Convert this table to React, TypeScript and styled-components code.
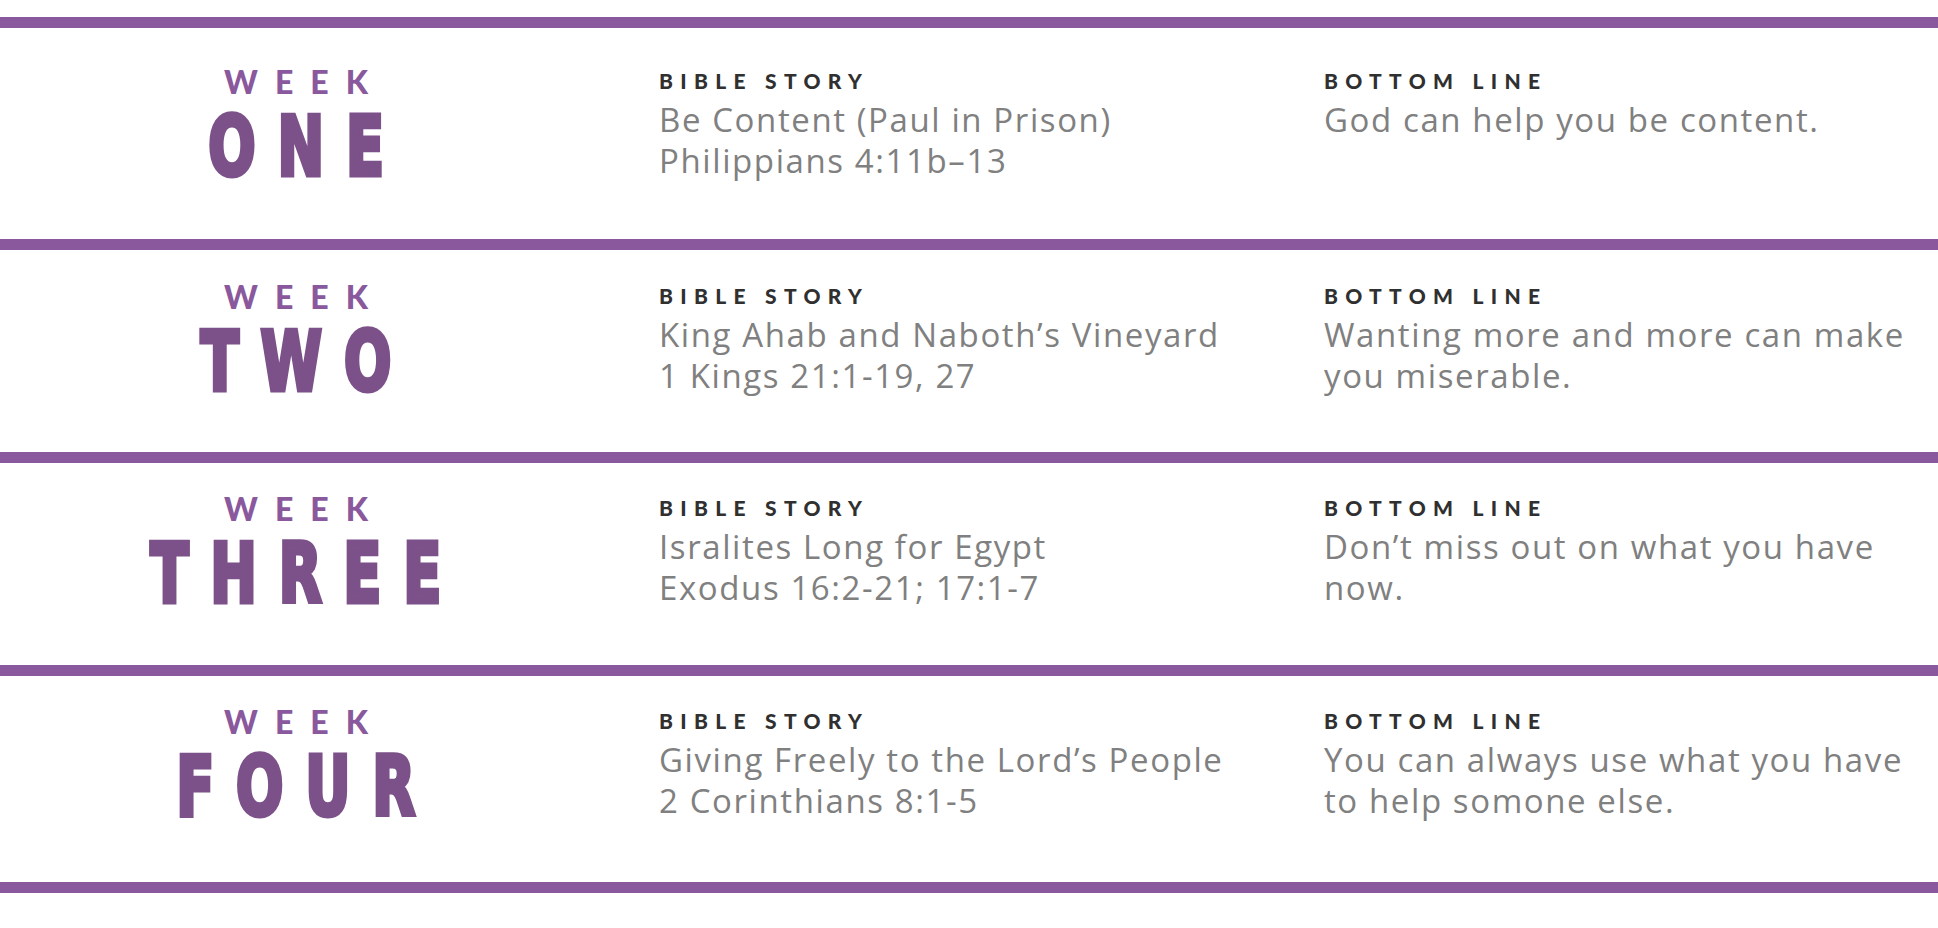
import styled, { createGlobalStyle } from 'styled-components';

const GlobalStyle = createGlobalStyle`
  html, body {
    margin: 0;
    padding: 0;
    background: #ffffff;
  }
`;

const Page = styled.div`
  padding-top: 17px;
  width: 100%;
`;

const Divider = styled.div`
  height: 11px;
  background-color: #8a589c;
`;

const Row = styled.div<{ $height: number; $top: number }>`
  display: grid;
  grid-template-columns: 592px 732px 1fr;
  height: ${(p) => p.$height}px;
  padding-top: ${(p) => p.$top}px;
  box-sizing: border-box;
`;

const WeekCell = styled.div`
  display: flex;
  flex-direction: column;
  align-items: center;
  padding-top: 3px;
`;

const WeekLabel = styled.div`
  font-family: Lato, 'Liberation Sans', sans-serif;
  font-weight: 900;
  font-size: 32px;
  line-height: 32px;
  letter-spacing: 17px;
  padding-left: 17px;
  color: #8a589c;
`;

// heavy condensed display word: bold face thickened a little, then narrowed
const WeekNumber = styled.div`
  margin-top: 8px;
  font-family: 'DejaVu Sans', sans-serif;
  font-weight: bold;
  font-size: 82px;
  line-height: 82px;
  letter-spacing: 32px;
  padding-left: 32px;
  color: #7c5189;
  -webkit-text-stroke: 5px #7c5189;
  transform: scaleX(0.68);
  white-space: nowrap;
`;

const InfoCell = styled.div<{ $indent: number }>`
  padding-left: ${(p) => p.$indent}px;
  padding-top: 6px;
`;

const Heading = styled.div`
  font-family: Lato, 'Liberation Sans', sans-serif;
  font-weight: 900;
  font-size: 21px;
  line-height: 24px;
  letter-spacing: 7.3px;
  color: #303030;
`;

const Body = styled.div`
  margin-top: 6px;
  font-family: 'Open Sans', 'Noto Sans', sans-serif;
  font-weight: 400;
  font-size: 33px;
  line-height: 41px;
  letter-spacing: 1.6px;
  color: #808080;
  white-space: nowrap;
`;

type Week = {
  label: string;
  story: string[];
  bottom: string[];
  height: number;
  top: number;
};

const weeks: Week[] = [
  {
    label: 'ONE',
    story: ['Be Content (Paul in Prison)', 'Philippians 4:11b–13'],
    bottom: ['God can help you be content.'],
    height: 211,
    top: 35,
  },
  {
    label: 'TWO',
    story: ['King Ahab and Naboth’s Vineyard', '1 Kings 21:1-19, 27'],
    bottom: ['Wanting more and more can make', 'you miserable.'],
    height: 202,
    top: 28,
  },
  {
    label: 'THREE',
    story: ['Isralites Long for Egypt', 'Exodus 16:2-21; 17:1-7'],
    bottom: ['Don’t miss out on what you have', 'now.'],
    height: 202,
    top: 27,
  },
  {
    label: 'FOUR',
    story: ['Giving Freely to the Lord’s People', '2 Corinthians 8:1-5'],
    bottom: ['You can always use what you have', 'to help somone else.'],
    height: 206,
    top: 27,
  },
];

const Lines = ({ lines }: { lines: string[] }) => (
  <Body>
    {lines.map((line, i) => (
      <span key={i}>
        {line}
        {i < lines.length - 1 && <br />}
      </span>
    ))}
  </Body>
);

const App = () => {
  return (
    <Page>
      <GlobalStyle />
      {weeks.map((week) => (
        <div key={week.label}>
          <Divider />
          <Row $height={week.height} $top={week.top}>
            <WeekCell>
              <WeekLabel>WEEK</WeekLabel>
              <WeekNumber>{week.label}</WeekNumber>
            </WeekCell>
            <InfoCell $indent={67}>
              <Heading>BIBLE STORY</Heading>
              <Lines lines={week.story} />
            </InfoCell>
            <InfoCell $indent={0}>
              <Heading>BOTTOM LINE</Heading>
              <Lines lines={week.bottom} />
            </InfoCell>
          </Row>
        </div>
      ))}
      <Divider />
    </Page>
  );
};

export default App;
